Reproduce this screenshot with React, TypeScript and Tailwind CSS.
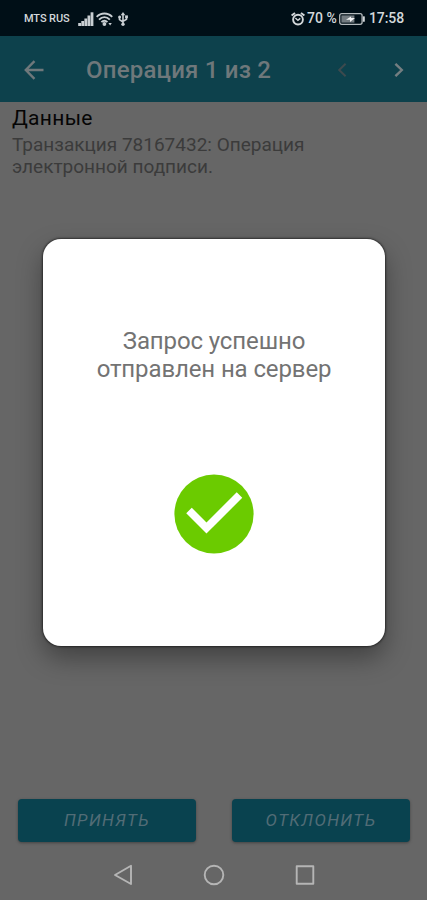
function SignalIcon() {
  return (
    <svg width="16" height="14" viewBox="0 0 16 14" fill="#c9cfd3">
      <rect x="0.2" y="11" width="2.8" height="3" />
      <rect x="3.3" y="9" width="2.8" height="5" />
      <rect x="6.4" y="6.5" width="2.8" height="7.5" />
      <rect x="9.5" y="3.5" width="2.8" height="10.5" />
      <rect x="12.6" y="0.3" width="2.8" height="13.7" />
    </svg>
  );
}

function WifiIcon() {
  return (
    <svg width="17" height="14" viewBox="0 0 17 14" fill="none" stroke="#c9cfd3" strokeWidth="1.9">
      <path d="M0.6 4.9C4.9 0.3 11.9 0.3 16.2 4.9" />
      <path d="M3 7.6C6.2 4.4 10.6 4.4 13.8 7.6" />
      <path d="M5.4 10.2C7.2 8.3 9.6 8.3 11.4 10.2" />
      <circle cx="8.4" cy="12" r="1.9" fill="#c9cfd3" stroke="none" />
      <path d="M12.4 11H15.8L14.1 13.6Z" fill="#c9cfd3" stroke="none" />
    </svg>
  );
}

function UsbIcon() {
  return (
    <svg width="10" height="14" viewBox="0 0 10 14" fill="none" stroke="#c9cfd3" strokeWidth="1.6">
      <path d="M5 2V12M1.5 5.5V7.6L5 10M8.5 4.5V7.2L5 9.4" />
      <path d="M5 0L7.3 3.2H2.7Z" fill="#c9cfd3" stroke="none" />
      <circle cx="1.6" cy="5" r="1.5" fill="#c9cfd3" stroke="none" />
      <path d="M7.1 3.4H9.9V6.2H7.1Z" fill="#c9cfd3" stroke="none" />
      <circle cx="5" cy="12.3" r="1.7" fill="#c9cfd3" stroke="none" />
    </svg>
  );
}

function AlarmIcon() {
  return (
    <svg width="14" height="14" viewBox="0 0 14 14" fill="none" stroke="#d3d8db" strokeWidth="1.9">
      <circle cx="7" cy="7.6" r="4.9" />
      <path d="M0.6 3.6L4 0.9M13.4 3.6L10 0.9" />
      <path d="M4.4 5.9L6.9 8.4L9.3 6.4" strokeWidth="1.4" />
    </svg>
  );
}

function BatteryIcon() {
  return (
    <svg width="26" height="12" viewBox="0 0 26 12" fill="none">
      <rect x="0.7" y="0.7" width="22.4" height="10.6" rx="2" stroke="#b3babd" strokeWidth="1.3" />
      <rect x="2.4" y="2.4" width="13" height="7.2" fill="#737c81" />
      <path d="M7 6.8L12 3.4V5.1H16L11 8.9V6.8Z" fill="#f1f3f4" />
      <rect x="23.9" y="3.2" width="1.9" height="5.6" rx="0.6" fill="#d3d8db" />
    </svg>
  );
}

function StatusBar() {
  return (
    <div className="flex h-9 items-center bg-[#000f17] pl-[24px] pr-[23px] pt-[1px] text-[#d3d8db]">
      <span className="w-[46px] whitespace-nowrap pt-[1px] text-[11px] font-medium tracking-[-0.1px]">MTS RUS</span>
      <div className="ml-[8px] flex items-center gap-[2px]">
        <SignalIcon />
        <WifiIcon />
        <span className="ml-[3px]">
          <UsbIcon />
        </span>
      </div>
      <div className="ml-auto flex items-center whitespace-nowrap text-[14px] font-medium">
        <AlarmIcon />
        <span className="ml-[2px] w-[32px]">70 %</span>
        <BatteryIcon />
        <span className="ml-[4px] w-[35px] tracking-[-0.1px]">17:58</span>
      </div>
    </div>
  );
}

function Header() {
  return (
    <header className="flex h-[66px] items-center bg-[#0d414c] pt-[1px]">
      <svg className="ml-[24px]" width="20" height="20" viewBox="0 0 20 20" fill="none" stroke="#6f787b" strokeWidth="2.4">
        <path d="M19.5 10H2M10.5 1.2L1.8 10L10.5 18.8" />
      </svg>
      <h1 className="ml-[42px] w-[186px] whitespace-nowrap text-[24px] font-medium tracking-[0.2px] text-[#6f787b]">
        Операция 1 из 2
      </h1>
      <svg className="ml-[65px]" width="10" height="14" viewBox="0 0 10 14" fill="none" stroke="#3d4a4e" strokeWidth="2">
        <path d="M8.6 0.8L2.2 7L8.6 13.2" />
      </svg>
      <svg className="ml-[47px]" width="10" height="14" viewBox="0 0 10 14" fill="none" stroke="#747e81" strokeWidth="2.4">
        <path d="M1.4 0.8L7.8 7L1.4 13.2" />
      </svg>
    </header>
  );
}

function NavBar() {
  return (
    <nav className="flex h-[50px] items-center justify-center gap-[70px]">
      <svg width="20" height="22" viewBox="0 0 20 22" fill="none" stroke="#b5b5b5" strokeWidth="1.9" strokeLinejoin="round">
        <path d="M18 1.8V20L2 11Z" />
      </svg>
      <svg width="22" height="22" viewBox="0 0 22 22" fill="none" stroke="#b5b5b5" strokeWidth="1.9">
        <circle cx="11" cy="11" r="9.3" />
      </svg>
      <svg width="20" height="22" viewBox="0 0 20 22" fill="none" stroke="#b5b5b5" strokeWidth="1.9" strokeLinejoin="round">
        <rect x="1.7" y="2.3" width="16.6" height="17.4" />
      </svg>
    </nav>
  );
}

function SuccessDialog() {
  return (
    <div className="absolute left-[43px] top-[239px] flex h-[407px] w-[342px] flex-col items-center rounded-[18px] bg-white shadow-[0_0_2px_1px_rgba(0,0,0,0.5),0_12px_26px_0_rgba(0,0,0,0.36)]">
      <p className="mt-[88px] whitespace-nowrap text-center text-[24px] leading-[28px] tracking-[-0.12px] text-[#737373]">
        Запрос успешно
        <br />
        отправлен на сервер
      </p>
      <svg className="mt-[91px]" width="80" height="80" viewBox="0 0 80 80" fill="none">
        <circle cx="40" cy="40" r="39.6" fill="#6bcb00" />
        <path d="M15 36.5L32.5 54L65.5 21" stroke="#fff" strokeWidth="7.8" />
      </svg>
    </div>
  );
}

const actions = ['ПРИНЯТЬ', 'ОТКЛОНИТЬ'];

export default function App() {
  return (
    <div className="relative flex h-[900px] w-[427px] flex-col overflow-hidden bg-[#666666] font-['Roboto',sans-serif]">
      <StatusBar />
      <Header />
      <main className="flex-1 px-[12px] pt-[4px]">
        <h2 className="text-[21px] leading-[25px] tracking-[0.3px] text-[#050505]">Данные</h2>
        <p className="mt-[3px] whitespace-nowrap text-[19px] leading-[22px] text-[#3b3b3b]">
          Транзакция 78167432: Операция
          <br />
          электронной подписи.
        </p>
      </main>
      <div className="flex gap-[36px] px-[18px] pb-[8px]">
        {actions.map((label) => (
          <button
            key={label}
            className="h-[43px] w-[178px] shrink-0 rounded-[4px] bg-[#09424f] pt-[1px] text-[17px] italic tracking-[1.4px] text-[#526c76] shadow-[0_1px_3px_rgba(0,0,0,0.35)]"
          >
            {label}
          </button>
        ))}
      </div>
      <NavBar />
      <SuccessDialog />
    </div>
  );
}
